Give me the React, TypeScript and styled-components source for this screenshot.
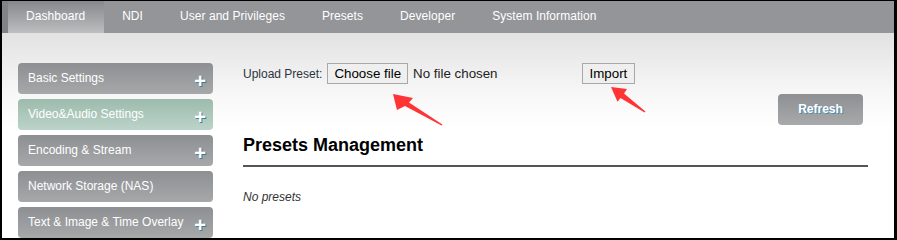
import { createGlobalStyle, styled } from "styled-components";

const GlobalStyle = createGlobalStyle`
    html, body {
        margin: 0;
        padding: 0;
        background: #000;
    }
    body {
        font-family: "Liberation Sans", Arial, sans-serif;
    }
`;

const tabs = ["Dashboard", "NDI", "User and Privileges", "Presets", "Developer", "System Information"];

const menu = [
    { label: "Basic Settings", plus: true },
    { label: "Video&Audio Settings", plus: true, active: true },
    { label: "Encoding & Stream", plus: true },
    { label: "Network Storage (NAS)", plus: false },
    { label: "Text & Image & Time Overlay", plus: true },
];

const App = () => {
    return (
        <>
            <GlobalStyle />
            <Frame>
                <NavBar>
                    {tabs.map((tab, index) => (
                        <Tab key={tab} $current={index === 0}>{tab}</Tab>
                    ))}
                </NavBar>
                <Body>
                    <SideMenu>
                        {menu.map((item) => (
                            <MenuItem key={item.label} $active={item.active}>
                                {item.label}
                                {item.plus && <Plus>+</Plus>}
                            </MenuItem>
                        ))}
                    </SideMenu>
                    <Main>
                        <UploadRow>
                            <Label>Upload Preset:</Label>
                            <FormButton type="button">Choose file</FormButton>
                            <FileName>No file chosen</FileName>
                            <ImportButton type="button">Import</ImportButton>
                        </UploadRow>
                        <Toolbar>
                            <RefreshButton type="button">Refresh</RefreshButton>
                        </Toolbar>
                        <Heading>Presets Management</Heading>
                        <Empty>No presets</Empty>
                    </Main>
                </Body>
                <Arrows width="892" height="237" viewBox="2 1 892 237">
                    <polygon points="393,94 413,98 409,102.5 442.4,124.5 441.6,125.5 405,106 397,110" />
                    <polygon points="611,87 627,89 624,93.6 645.4,111.5 644.6,112.5 620.5,98 617.5,101.7" />
                </Arrows>
            </Frame>
        </>
    );
};

export default App;

const Frame = styled.div`
    position: relative;
    width: 892px;
    height: 237px;
    margin: 1px 3px 2px 2px;
    background: #fff;
    overflow: hidden;
    display: flex;
    flex-direction: column;
`;

const NavBar = styled.nav`
    height: 32px;
    display: flex;
    align-items: stretch;
    background: #939598;
    border-left: 6px solid #828386;
`;

const Tab = styled.div<{ $current?: boolean }>`
    display: flex;
    align-items: center;
    padding: 0 19px 2px 18px;
    color: #fff;
    font-size: 12px;
    letter-spacing: 0.05px;
    background: ${(p) => (p.$current ? "linear-gradient(#87888b, #bdbec0)" : "transparent")};
`;

const Body = styled.div`
    flex: 1;
    display: flex;
    gap: 30px;
    padding: 30px 26px 0 16px;
    background: linear-gradient(#e2e2e2 0px, #f7f7f7 60px, #fff 95px);
`;

const SideMenu = styled.div`
    width: 195px;
    flex-shrink: 0;
    display: flex;
    flex-direction: column;
    gap: 5px;
`;

const MenuItem = styled.div<{ $active?: boolean }>`
    position: relative;
    height: 31px;
    box-sizing: border-box;
    padding: 8px 10px 0;
    border-radius: 4px;
    color: #fff;
    font-size: 12px;
    line-height: 14px;
    background: ${(p) => (p.$active ? "linear-gradient(#9cbbad, #bcd3c9)" : "linear-gradient(#8e8f92, #a7a8aa)")};
`;

const Plus = styled.span`
    position: absolute;
    right: 7px;
    top: 8px;
    font-size: 20px;
    line-height: 20px;
    font-weight: bold;
    color: #fff;
    text-shadow: 1px 1px 0 #3a7fa0;
`;

const Main = styled.div`
    flex: 1;
    display: flex;
    flex-direction: column;
`;

const UploadRow = styled.div`
    display: flex;
    align-items: center;
    height: 21px;
`;

const Label = styled.span`
    font-size: 12px;
    color: #2b3440;
    margin-right: 5px;
`;

const FormButton = styled.button`
    height: 21px;
    padding: 0 6px;
    font-family: "Liberation Sans", Arial, sans-serif;
    font-size: 13.33px;
    color: #000;
    background: #efefef;
    border: 1px solid #a8a8a8;
    border-radius: 0;
`;

const FileName = styled.span`
    margin-left: 5px;
    font-size: 13.33px;
    color: #222;
`;

const ImportButton = styled(FormButton)`
    margin-left: 84px;
    padding: 0 7px;
`;

const Toolbar = styled.div`
    display: flex;
    justify-content: flex-end;
    padding-right: 5px;
    margin-top: 10px;
`;

const RefreshButton = styled.button`
    width: 85px;
    height: 31px;
    padding: 0 0 2px;
    border: none;
    border-radius: 4px;
    background: linear-gradient(#8e8f92, #a8a9ab);
    color: #fff;
    font-family: "Liberation Sans", Arial, sans-serif;
    font-size: 12px;
    font-weight: bold;
    text-shadow: 1px 1px 0 #4a8fb0;
`;

const Heading = styled.h2`
    margin: 9px 0 0;
    padding-bottom: 9px;
    font-size: 18px;
    line-height: 22px;
    font-weight: bold;
    color: #000;
    border-bottom: 2px solid #555;
`;

const Empty = styled.p`
    margin: 23px 0 0;
    font-size: 12px;
    font-style: italic;
    color: #333;
`;

const Arrows = styled.svg`
    position: absolute;
    left: 0;
    top: 0;
    pointer-events: none;
    fill: #ff3434;
`;
